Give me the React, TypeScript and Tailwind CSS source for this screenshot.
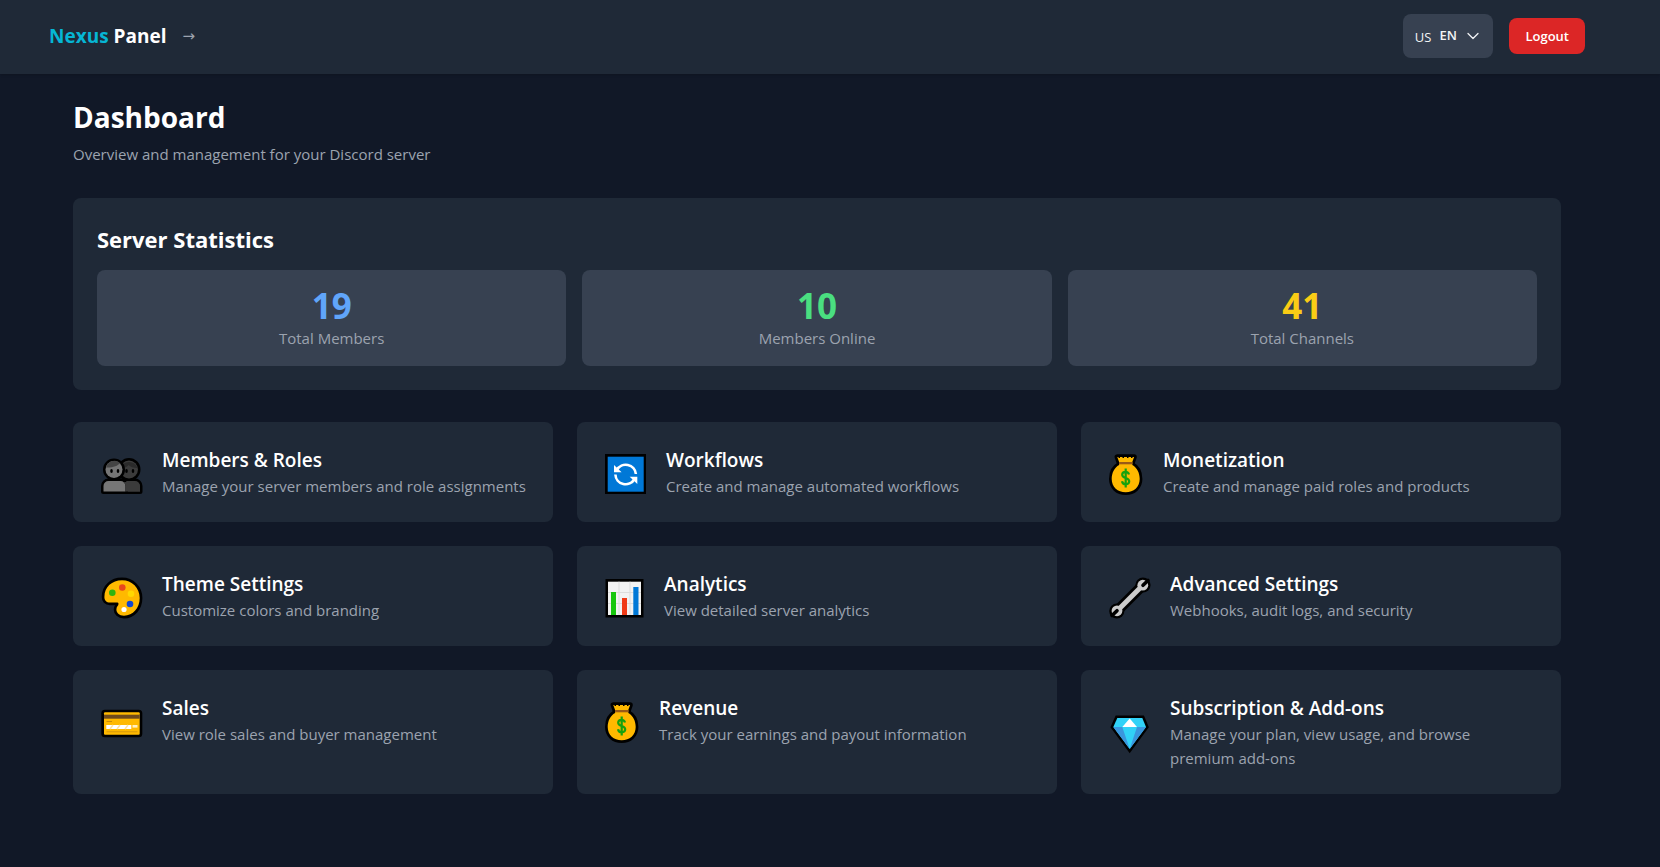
import { useState } from "react";
import type { ReactNode } from "react";
import { ChevronDown } from "lucide-react";

interface Stat {
  label: string;
  value: number;
  color: string;
}

interface Section {
  title: string;
  description: string;
  href: string;
  icon: ReactNode;
}

function MembersIcon() {
  return (
    <svg width="49" height="48" viewBox="0 0 49 48" aria-hidden="true">
      <g fill="#000" stroke="#000" strokeWidth="5" strokeLinejoin="round">
        <circle cx="32" cy="21.5" r="9" />
        <path d="M20 43.5V38a5 5 0 0 1 5-5h13a5 5 0 0 1 5 5v5.5z" />
      </g>
      <circle cx="32" cy="21.5" r="9" fill="#3b3b3b" />
      <path d="M23.5 20a9 9 0 0 1 17 0c-4 0-7-1-9-3-1 2-4 3-8 3z" fill="#2a2a2a" />
      <path d="M20 43.5V38a5 5 0 0 1 5-5h13a5 5 0 0 1 5 5v5.5z" fill="#3b3b3b" />
      <circle cx="17" cy="21.5" r="9" fill="#000" stroke="#000" strokeWidth="4" />
      <path
        d="M6.5 43.5V38a5 5 0 0 1 5-5h12a5 5 0 0 1 5 5v5.5z"
        fill="#767676"
        stroke="#000"
        strokeWidth="5"
        strokeLinejoin="round"
        paintOrder="stroke"
      />
      <path d="M28.5 43.5V38a5 5 0 0 0-2-4H38a5 5 0 0 1 5 4v5.5z" fill="#3b3b3b" />
      <circle cx="17" cy="21.5" r="8.5" fill="#767676" />
      <path d="M9 19.5a8.5 8.5 0 0 1 14-4.5c-2 3-8 5-14 4.5z" fill="#454545" />
      <g fill="#000">
        <ellipse cx="14.5" cy="23" rx="1.3" ry="2" />
        <ellipse cx="21" cy="23" rx="1.3" ry="2" />
        <ellipse cx="29.5" cy="23" rx="1.3" ry="2" />
        <ellipse cx="36" cy="23" rx="1.3" ry="2" />
      </g>
    </svg>
  );
}

function WorkflowIcon() {
  return (
    <svg width="49" height="48" viewBox="0 0 49 48" aria-hidden="true">
      <rect x="4" y="6" width="41" height="40" fill="#000" />
      <rect x="6.7" y="8.7" width="36" height="35" fill="#0078d7" />
      <g fill="none" stroke="#fff" strokeWidth="2.6">
        <path d="M15.8 22A10.2 10.2 0 0 1 34.9 26" />
        <path d="M14.4 26.5A10.2 10.2 0 0 0 33.5 31" />
      </g>
      <path d="M13 17v7.3h7.6z" fill="#fff" />
      <path d="M36.3 36v-7.3h-7.6z" fill="#fff" />
    </svg>
  );
}

function MoneyBagIcon() {
  return (
    <svg width="42" height="48" viewBox="0 0 42 48" aria-hidden="true">
      <path
        d="M12.3 9h16.8l-1.8 5v3C32 19.5 34.7 25 34.7 31c0 8-6 13.300-14 13.300S6.700 39 6.700 31c0-6 2.700-11.500 7.400-14v-3z"
        fill="#ffb900"
        stroke="#000"
        strokeWidth="5.4"
        strokeLinejoin="round"
        paintOrder="stroke"
      />
      <path
        d="M13.5 8.500h1.500v1.500h-1.500zM17.500 8.500h1.500v1.500h-1.500zM22 8.500h1.500v1.500h-1.500zM26 8.500h1.500v1.500h-1.500z"
        fill="#000"
      />
      <rect x="14" y="14" width="13.5" height="2.3" fill="#9a5a17" />
      <path
        d="M24 26.5c-.5-2-2-2.700-3.400-2.700-2 0-3.400 1.200-3.400 2.900 0 4 7 2.500 7 6.600 0 1.800-1.600 3-3.600 3-1.800 0-3.200-1-3.600-3M20.700 20.500v19"
        fill="none"
        stroke="#16a10e"
        strokeWidth="2.2"
      />
    </svg>
  );
}

function PaletteIcon() {
  return (
    <svg width="49" height="48" viewBox="0 0 49 48" aria-hidden="true">
      <path
        d="M7.4 25C7.4 15 15 8.300 25 8.300S42.700 16 42.700 26 36 43.700 27 43.700c-5 0-7.600-3-7.600-6.200 0-3 2.100-3.800 2.100-5.500 0-1-.5-1.400-2-1.400h-6.500c-3.600 0-5.600-2.400-5.600-5.600z"
        fill="#ffb900"
        stroke="#000"
        strokeWidth="5.4"
        strokeLinejoin="round"
        paintOrder="stroke"
      />
      <circle cx="25.3" cy="15.5" r="3.3" fill="#e8481c" />
      <circle cx="15.3" cy="20.7" r="3.3" fill="#2fb40e" />
      <circle cx="34" cy="21.7" r="3.3" fill="#ffd800" />
      <circle cx="33" cy="32" r="3.3" fill="#0f46d2" />
      <circle cx="27" cy="37.5" r="2.6" fill="#fff" />
    </svg>
  );
}

function ChartIcon() {
  return (
    <svg width="47" height="48" viewBox="0 0 47 48" aria-hidden="true">
      <rect x="4.5" y="7" width="38" height="38.5" fill="#000" />
      <rect x="7" y="9.7" width="33" height="33.3" fill="#f2f2f2" />
      <path d="M7 20.5h33M7 31.500h33M18 9.700V43M29 9.700V43" stroke="#dcdcdc" />
      <rect x="10" y="20" width="5" height="23" fill="#16c60c" />
      <rect x="21" y="26" width="5" height="17" fill="#f03a17" />
      <rect x="32.3" y="15" width="5.2" height="28" fill="#0078d7" />
    </svg>
  );
}

function WrenchIcon() {
  return (
    <svg width="49" height="48" viewBox="0 0 49 48" aria-hidden="true">
      <path d="M14 37L36 15" stroke="#000" strokeWidth="10.5" />
      <circle cx="38" cy="13" r="7.6" />
      <circle cx="11.8" cy="39" r="7.6" />
      <path d="M14 37L36 15" stroke="#ccc" strokeWidth="5" />
      <circle cx="37.8" cy="13.2" r="5.4" fill="#ccc" />
      <circle cx="12" cy="38.8" r="5.4" fill="#ccc" />
      <path
        d="M43 8.5l-5 4.800M7 43.500l5-4.800"
        stroke="#000"
        strokeWidth="3.6"
        strokeLinecap="round"
      />
    </svg>
  );
}

function CardIcon() {
  return (
    <svg width="49" height="48" viewBox="0 0 49 48" aria-hidden="true">
      <rect x="4.3" y="13.7" width="41" height="27.6" rx="3.5" fill="#000" />
      <rect x="7" y="16.2" width="35.7" height="22.6" rx="1" fill="#ffb900" />
      <rect x="7" y="18.7" width="35.7" height="4" fill="#6f4a1c" />
      <path d="M9.5 25.500h5.500" stroke="#c98a0a" />
      <rect x="9.3" y="29" width="25" height="4" fill="#fff" />
      <path d="M13 33l3-4M20 33l3-4M28 33l3-4" stroke="#ffe3a0" strokeWidth="1.5" />
      <rect x="35.5" y="29" width="5" height="2.6" fill="#fff0c4" />
      <path d="M9.5 35.800h31" stroke="#d3960c" />
    </svg>
  );
}

function DiamondIcon() {
  return (
    <svg width="49" height="48" viewBox="0 0 49 48" aria-hidden="true">
      <path
        d="M12.3 10h25L41 19 24.700 41 8.300 19z"
        fill="#31d2f7"
        stroke="#000"
        strokeWidth="5"
        paintOrder="stroke"
      />
      <path d="M8.3 19h9l7.400 22zM41 19h-9l-7.300 22z" fill="#3a96dd" />
      <path d="M24.7 10.500L32 19H17.300z" fill="#fff" />
    </svg>
  );
}

const stats: Stat[] = [
  { label: "Total Members", value: 19, color: "text-[#60a5fa]" },
  { label: "Members Online", value: 10, color: "text-[#4ade80]" },
  { label: "Total Channels", value: 41, color: "text-[#facc15]" },
];

const sections: Section[] = [
  {
    title: "Members & Roles",
    description: "Manage your server members and role assignments",
    href: "#members",
    icon: <MembersIcon />,
  },
  {
    title: "Workflows",
    description: "Create and manage automated workflows",
    href: "#workflows",
    icon: <WorkflowIcon />,
  },
  {
    title: "Monetization",
    description: "Create and manage paid roles and products",
    href: "#monetization",
    icon: <MoneyBagIcon />,
  },
  {
    title: "Theme Settings",
    description: "Customize colors and branding",
    href: "#theme",
    icon: <PaletteIcon />,
  },
  {
    title: "Analytics",
    description: "View detailed server analytics",
    href: "#analytics",
    icon: <ChartIcon />,
  },
  {
    title: "Advanced Settings",
    description: "Webhooks, audit logs, and security",
    href: "#advanced",
    icon: <WrenchIcon />,
  },
  {
    title: "Sales",
    description: "View role sales and buyer management",
    href: "#sales",
    icon: <CardIcon />,
  },
  {
    title: "Revenue",
    description: "Track your earnings and payout information",
    href: "#revenue",
    icon: <MoneyBagIcon />,
  },
  {
    title: "Subscription & Add-ons",
    description: "Manage your plan, view usage, and browse premium add-ons",
    href: "#subscription",
    icon: <DiamondIcon />,
  },
];

function Header() {
  const [language, setLanguage] = useState("EN");

  return (
    <header className="bg-[#1f2937] pt-3.5 pb-4 shadow-sm">
      <div className="mr-6 ml-[49px] flex max-w-[1536px] items-center justify-between">
        <div className="flex items-center gap-4">
          <a href="#home" className="text-[19px] leading-7 font-bold">
            <span className="text-[#06b6d4]">Nexus</span> Panel
          </a>
          <span className="font-['DejaVu_Sans',sans-serif] text-[15px] text-[#9ca3af]">→</span>
        </div>
        <div className="flex items-center gap-4">
          <label className="relative flex h-11 items-center gap-2 rounded-lg bg-[#374151] px-3 text-[#f3f4f6]">
            <span className="pt-1 text-[13px] font-medium">US</span>
            <select
              aria-label="Language"
              value={language}
              onChange={(e) => setLanguage(e.target.value)}
              className="w-[42px] appearance-none bg-transparent text-[13px] font-semibold focus:outline-none"
            >
              <option value="EN">EN</option>
            </select>
            <ChevronDown
              className="pointer-events-none absolute right-2.5 size-5"
              strokeWidth={1.5}
            />
          </label>
          <button
            type="button"
            className="rounded-lg bg-[#dc2626] px-4 py-2 text-[13px] leading-5 font-semibold hover:bg-[#b91c1c]"
          >
            Logout
          </button>
        </div>
      </div>
    </header>
  );
}

export default function App() {
  return (
    <div className="min-h-screen bg-[#111827] font-['Open_Sans',sans-serif] text-white">
      <Header />
      <main className="mr-6 ml-[49px] max-w-[1536px] p-6">
        <h1 className="mb-1.5 text-[28px] leading-[38px] font-bold">Dashboard</h1>
        <p className="mb-8 text-[15px] leading-6 text-[#9ca3af]">
          Overview and management for your Discord server
        </p>

        <section className="mb-8 rounded-lg bg-[#1f2937] p-6">
          <h2 className="mb-3.5 text-[22px] leading-[34px] font-bold">Server Statistics</h2>
          <div className="grid grid-cols-1 gap-4 md:grid-cols-3">
            {stats.map((stat) => (
              <div key={stat.label} className="rounded-lg bg-[#374151] p-4 text-center">
                <div className={`text-[35px] leading-10 font-bold ${stat.color}`}>{stat.value}</div>
                <div className="text-[15px] leading-6 text-[#9ca3af]">{stat.label}</div>
              </div>
            ))}
          </div>
        </section>

        <div className="grid grid-cols-1 gap-6 md:grid-cols-2 lg:grid-cols-3">
          {sections.map((section) => (
            <a
              key={section.title}
              href={section.href}
              className="rounded-lg bg-[#1f2937] p-6 hover:bg-[#374151]"
            >
              <div className="flex items-center gap-4">
                <span className="shrink-0">{section.icon}</span>
                <div>
                  <h3 className="text-[19px] leading-7 font-semibold">{section.title}</h3>
                  <p className="text-[15px] leading-6 text-[#9ca3af]">{section.description}</p>
                </div>
              </div>
            </a>
          ))}
        </div>
      </main>
    </div>
  );
}
